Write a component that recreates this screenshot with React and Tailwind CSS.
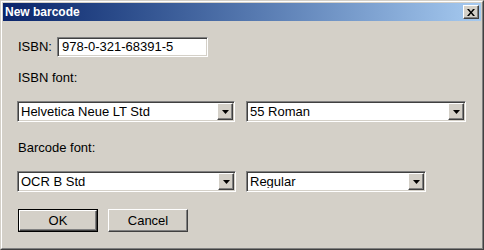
import React from 'react';

// Classic Win2000-style 3D edges
const sunken =
  'border border-t-[#808080] border-l-[#808080] border-r-white border-b-white shadow-[inset_1px_1px_0_#404040,inset_-1px_-1px_0_#d4d0c8]';
const raised =
  'border border-t-white border-l-white border-r-[#404040] border-b-[#404040] shadow-[inset_-1px_-1px_0_#808080]';

function ComboBox({ value, width }) {
  return (
    <div className={`flex items-center h-[21px] bg-white ${sunken} ${width}`}>
      <span className="flex-1 pl-[3px] leading-none text-black truncate">{value}</span>
      <div className={`mr-[1px] w-[16px] h-[17px] bg-[#d4d0c8] flex items-center justify-center ${raised}`}>
        <svg width="7" height="4" viewBox="0 0 7 4">
          <path d="M0 0h7L3.5 4z" fill="#000" />
        </svg>
      </div>
    </div>
  );
}

function Button({ children, isDefault = false }) {
  return (
    <div className={`w-[80px] h-[23px] ${isDefault ? 'border border-black' : ''}`}>
      <div className={`w-full h-full bg-[#d4d0c8] flex items-center justify-center text-black ${raised}`}>
        {children}
      </div>
    </div>
  );
}

export default function App() {
  return (
    <div
      className="w-[484px] h-[250px] bg-[#d4d0c8] border border-t-[#d4d0c8] border-l-[#d4d0c8] border-r-[#404040] border-b-[#404040] text-[13px]"
      style={{ fontFamily: '"Liberation Sans", Arial, sans-serif' }}
    >
      <div className="h-full border border-t-white border-l-white border-r-[#808080] border-b-[#808080] p-[1px] flex flex-col">
        {/* Title bar */}
        <div className="h-[18px] flex items-center justify-between pl-[2px] pr-[2px] bg-gradient-to-r from-[#0a246a] to-[#a6caf0]">
          <span className="text-white font-bold text-[12px] leading-none">New barcode</span>
          <div className={`w-[16px] h-[14px] bg-[#d4d0c8] flex items-center justify-center ${raised}`}>
            <svg width="8" height="7" viewBox="0 0 8 7">
              <path d="M0 0h2l2 2.5L6 0h2L5 3.5 8 7H6L4 4.5 2 7H0l3-3.5z" fill="#000" />
            </svg>
          </div>
        </div>

        {/* Body */}
        <div className="flex flex-col pl-[14px] pt-[16px] text-black">
          <div className="flex items-center h-[20px]">
            <span className="w-[40px] pl-[1px]">ISBN:</span>
            <div className={`w-[151px] h-[20px] bg-white flex items-center pl-[4px] ${sunken}`}>
              978-0-321-68391-5
            </div>
          </div>

          <div className="mt-[14px] h-[14px] leading-[14px] pl-[1px]">ISBN font:</div>

          <div className="mt-[16px] flex gap-[11px]">
            <ComboBox value="Helvetica Neue LT Std" width="w-[218px]" />
            <ComboBox value="55 Roman" width="w-[220px]" />
          </div>

          <div className="mt-[19px] h-[14px] leading-[14px] pl-[1px]">Barcode font:</div>

          <div className="mt-[16px] flex gap-[10px]">
            <ComboBox value="OCR B Std" width="w-[219px]" />
            <ComboBox value="Regular" width="w-[180px]" />
          </div>

          <div className="mt-[17px] flex gap-[10px] pl-[1px]">
            <Button isDefault>OK</Button>
            <Button>Cancel</Button>
          </div>
        </div>
      </div>
    </div>
  );
}
